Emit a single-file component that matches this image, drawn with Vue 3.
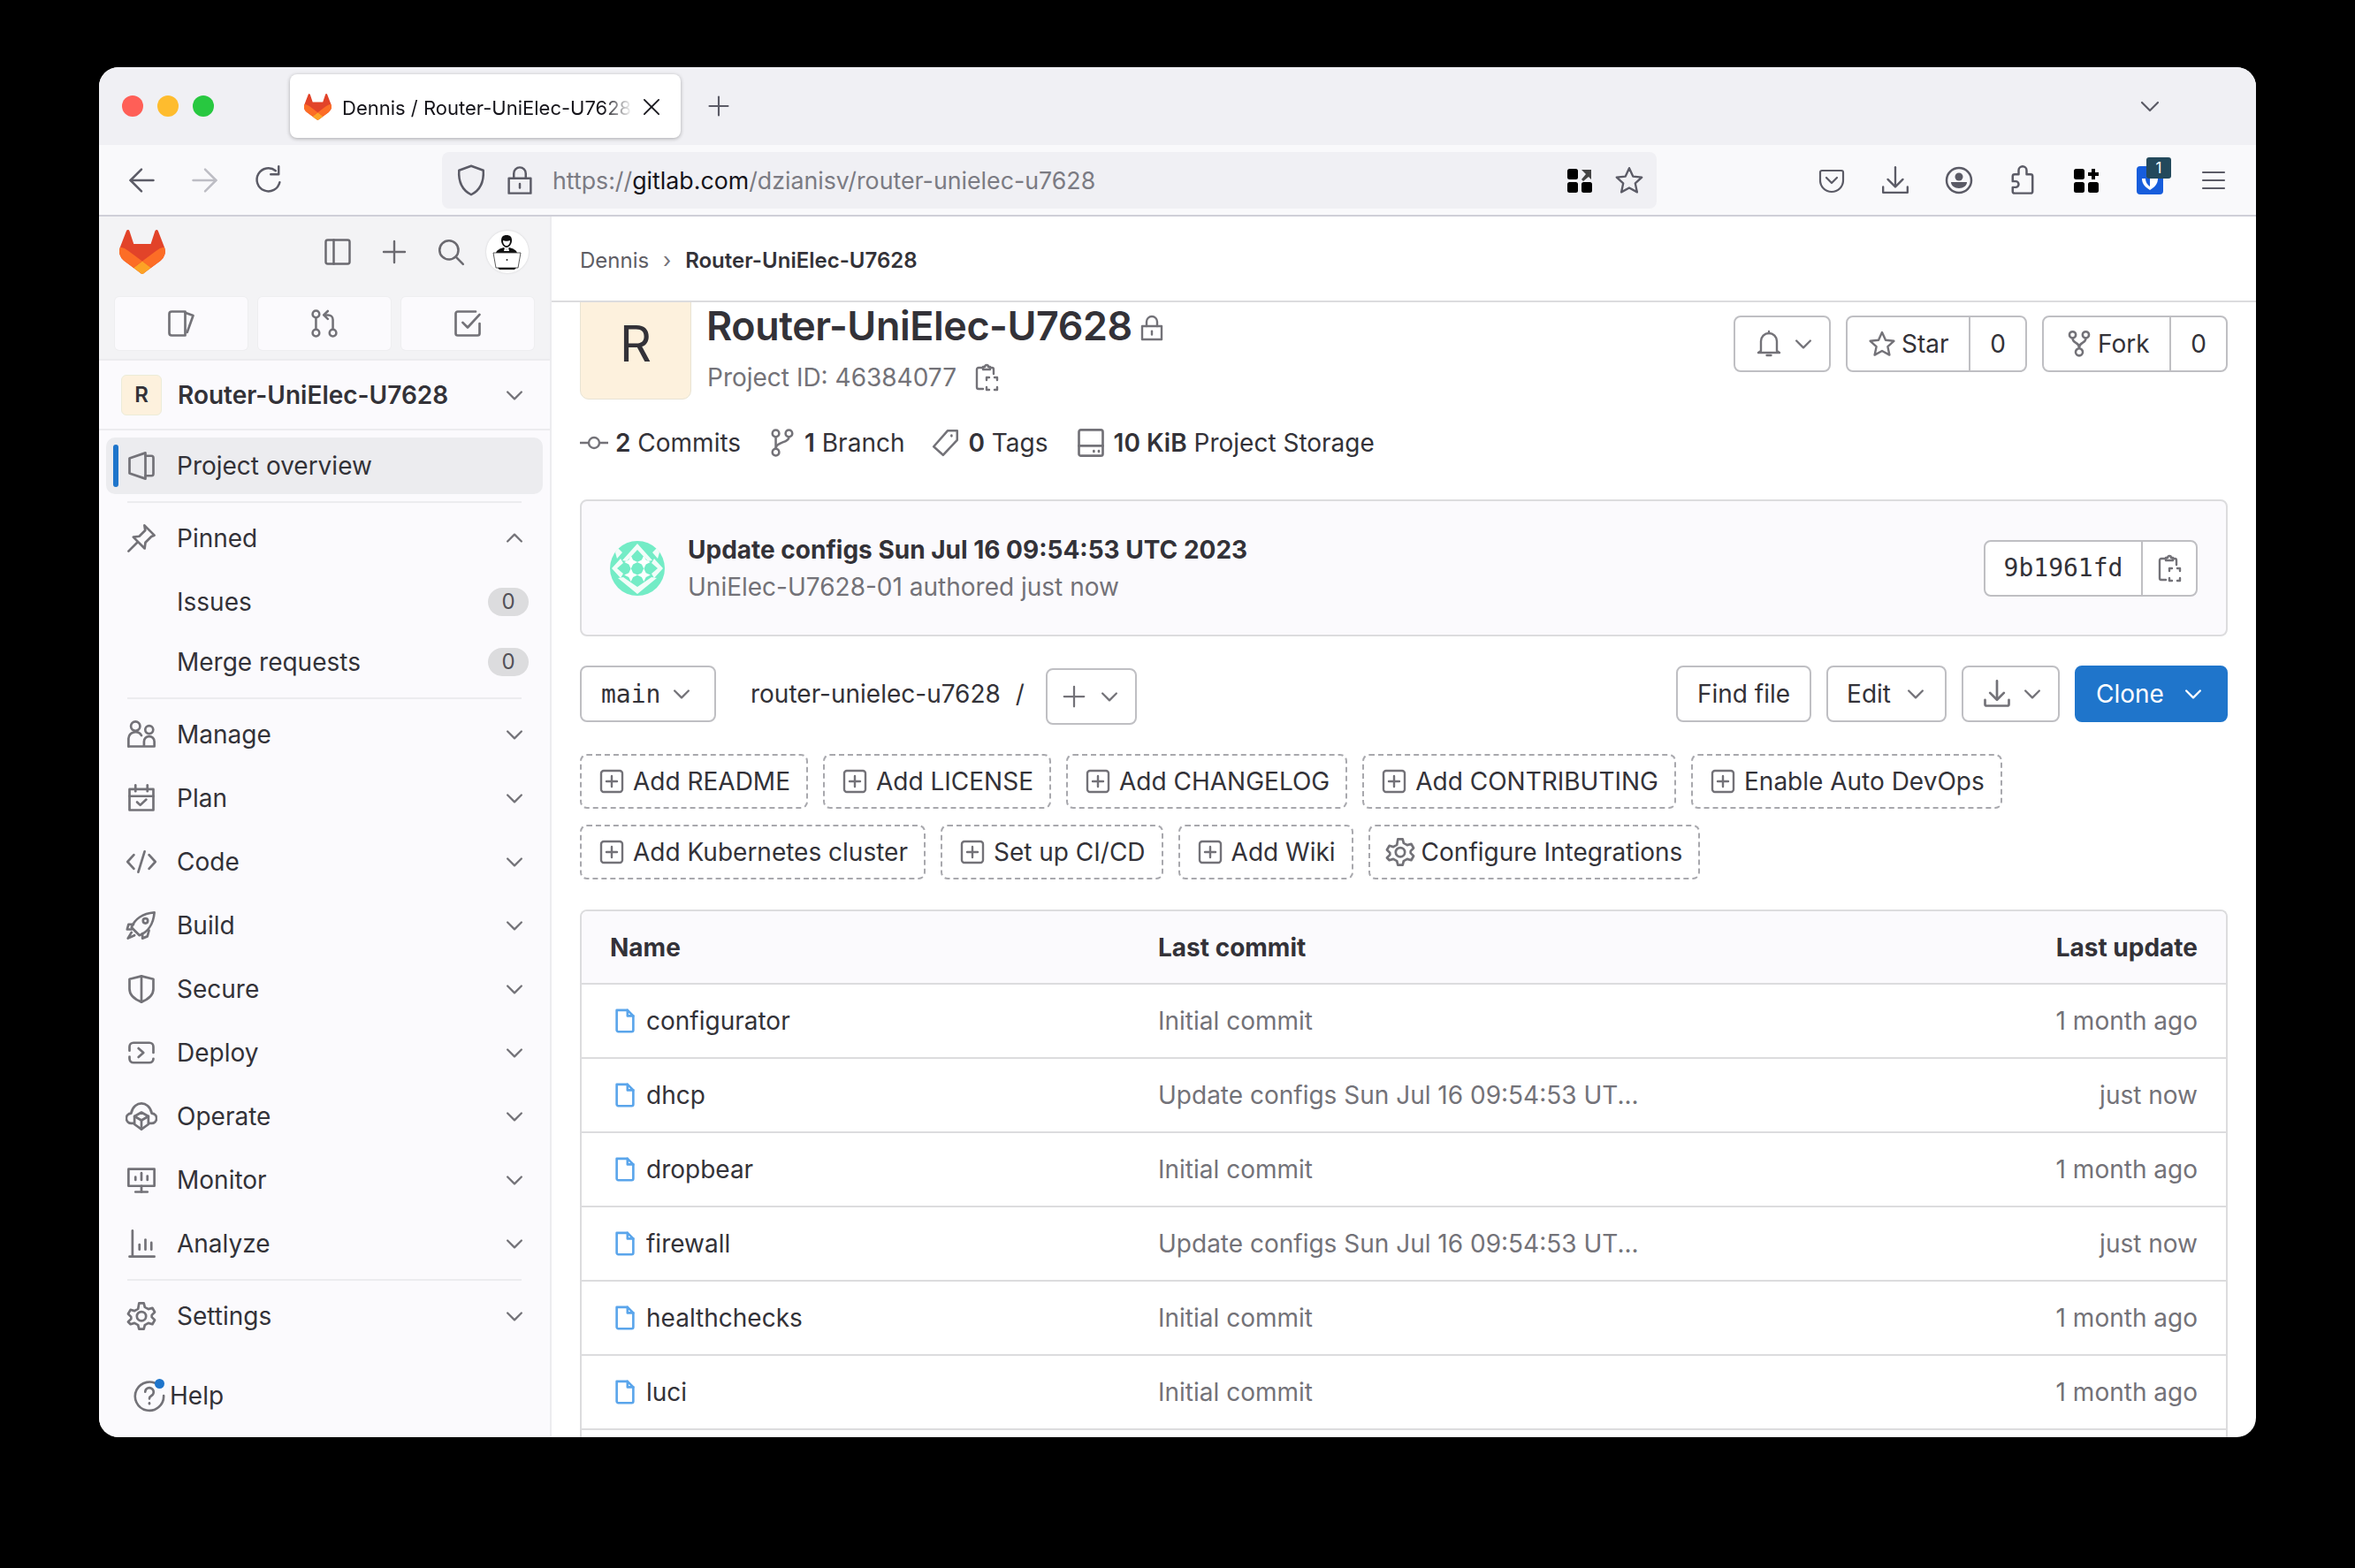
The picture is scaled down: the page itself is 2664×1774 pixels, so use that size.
<script setup>
import { h } from 'vue'

// 16x16 stroke icons
const icons = {
  issues: ['M3.2 2H10v12H3.2A1.2 1.2 0 0 1 2 12.8V3.2A1.2 1.2 0 0 1 3.2 2z', 'M10 2.600l4 1.400-3 8.400'],
  merge: ['M3.500 5v6', 'M12.500 11V6a2.500 2.500 0 0 0-2.500-2.500H8', 'M9.800 1.400L7.600 3.500l2.200 2.100', 'M3.500 1.200a1.800 1.800 0 1 0 0 3.600 1.800 1.800 0 0 0 0-3.600z', 'M3.500 11.200a1.800 1.800 0 1 0 0 3.600 1.800 1.800 0 0 0 0-3.600z', 'M12.500 11.200a1.800 1.800 0 1 0 0 3.600 1.800 1.800 0 0 0 0-3.600z'],
  todo: ['M12 2H3a1 1 0 0 0-1 1v10a1 1 0 0 0 1 1h10a1 1 0 0 0 1-1V8', 'M5.500 7.500L8 10l6-6.500'],
  overview: ['M2 4.200L10 1.500v13L2 11.800z', 'M10 3h3a1 1 0 0 1 1 1v8a1 1 0 0 1-1 1h-3'],
  pin: ['M1.500 14.500L6 10', 'M9.500 1.500l5 5-1.500.6-3 3-.4 3L3.900 7.400l3-.4 3-3z'],
  users: ['M5 1.500a2.300 2.300 0 1 0 0 4.600 2.300 2.300 0 0 0 0-4.600z', 'M1.500 14V10a3.500 3.500 0 0 1 6.500-1.500', 'M1.500 14H14.500V11.500a2.600 2.600 0 0 0-5.200 0V14', 'M11.900 3.600a2 2 0 1 0 0 4 2 2 0 0 0 0-4z'],
  plan: ['M2 3.500h12v10.500H2z', 'M2 7h12', 'M5 1.500v3', 'M11 1.500v3', 'M5.800 10l1.600 1.500 3-2.800'],
  code: ['M4.200 4.500L1 8l3.200 3.500', 'M11.800 4.500L15 8l-3.200 3.500', 'M9.600 2.800L6.400 13.200'],
  rocket: ['M5 11l-2-2c1.500-4 5.500-7 11.500-7.500C14 7.500 11 11.500 7 13z', 'M4 7.500H1.500L.8 10 3 10', 'M8.500 12v2.500l2.500-1 .8-3', 'M3 11.500L1.200 14.500 4.500 13', 'M10 4.500a1.200 1.200 0 1 0 0 2.400 1.200 1.200 0 0 0 0-2.400z'],
  shield: ['M2 3l6-1.500L14 3v5c0 3-3 5.300-6 6.500C5 13.300 2 11 2 8z', 'M8 1.500v13'],
  deploy: ['M2 7V5a2 2 0 0 1 2-2h8a2 2 0 0 1 2 2v3', 'M2 10v1a2 2 0 0 0 2 2h8a2 2 0 0 0 2-2', 'M6.500 5.800L9 8l-2.500 2.200'],
  operate: ['M4 11.500H3A2.500 2.500 0 0 1 2.800 6.500C3.500 3 6 1.500 8 1.500s4.500 1.500 5.200 5A2.500 2.500 0 0 1 13 11.500h-1', 'M8 6l3.500 2v4L8 14.500 4.500 12V8z', 'M4.500 8L8 10l3.500-2', 'M8 10v4.500'],
  monitor: ['M1.500 2.500h13v8.500h-13z', 'M5 14h6', 'M8 11v3', 'M5 8V6.500', 'M8 8V4.500', 'M11 8V6'],
  analyze: ['M2 14.500h12.500', 'M3.500 1.500v13', 'M7 11V8.500', 'M10 11V6', 'M13 11V7.500'],
  gear: ['M6.800 1.500h2.400l.5 2 1.800 1 2-.6 1.200 2.100-1.500 1.500v1l1.500 1.500-1.200 2.100-2-.6-1.800 1-.5 2H6.800l-.5-2-1.800-1-2 .6L1.300 10.900l1.500-1.500v-1L1.300 6.900 2.500 4.800l2 .6 1.800-1z', 'M8 5.800a2.300 2.300 0 1 0 0 4.600 2.300 2.300 0 0 0 0-4.600z'],
  help: ['M12.500 3.200A6.800 6.800 0 1 0 14.800 8', 'M6 6.200a2 2 0 1 1 3 1.800c-.7.400-1 .8-1 1.500', 'M8 11.500v.4'],
  lock: ['M2.500 7h11v7.500h-11z', 'M5 7V4.500a3 3 0 0 1 6 0V7', 'M8 9.800v2'],
  copy: ['M10 2.500h1a1 1 0 0 1 1 1V6', 'M6 2.500H3.500a1 1 0 0 0-1 1V13.500a1 1 0 0 0 1 1H6', 'M6 3.500V2h1a1 1 0 0 1 2 0h1v1.500z', 'M8 9.500V8h1.500', 'M12.500 8H14v1.500', 'M14 13.500V15h-1.500', 'M9.500 15H8v-1.500'],
  commit: ['M0 8h4.500', 'M11.500 8H16', 'M8 5a3 3 0 1 0 0 6 3 3 0 0 0 0-6z'],
  branch: ['M4.500 5v6', 'M11.500 5c0 3-7 2.500-7 6', 'M4.500 1.200a1.800 1.800 0 1 0 0 3.600 1.800 1.800 0 0 0 0-3.600z', 'M11.500 1.200a1.800 1.800 0 1 0 0 3.600 1.800 1.800 0 0 0 0-3.600z', 'M4.500 11.200a1.800 1.800 0 1 0 0 3.600 1.800 1.800 0 0 0 0-3.600z'],
  fork: ['M4.500 5c0 3 3.500 2 3.500 5', 'M11.500 5c0 3-3.500 2-3.500 5', 'M4.500 1.500a1.700 1.700 0 1 0 0 3.400 1.700 1.700 0 0 0 0-3.400z', 'M11.500 1.500a1.700 1.700 0 1 0 0 3.400 1.700 1.700 0 0 0 0-3.400z', 'M8 10.500a1.900 1.900 0 1 0 0 3.800 1.900 1.900 0 0 0 0-3.800z'],
  tag: ['M9 1.500h5v5l-7.500 8L1.500 10z', 'M11 4v.4'],
  disk: ['M3 1.500h10a1 1 0 0 1 1 1v11a1 1 0 0 1-1 1H3a1 1 0 0 1-1-1v-11a1 1 0 0 1 1-1z', 'M2 9.500h12', 'M9.500 12v.4', 'M12 12v.4'],
  bell: ['M3.500 12V6.500a4.500 4.500 0 0 1 9 0V12l1.500 1H2z', 'M8 1v1', 'M6.800 14.500h2.400'],
  star: ['M8 1.500l2 4.400 4.700.5-3.500 3.200 1 4.700L8 12l-4.200 2.300 1-4.700L1.300 6.400 6 5.900z'],
  download: ['M8 1.500v9', 'M4.500 7.500L8 11l3.500-3.500', 'M2 11v2.200a.8.800 0 0 0 .8.800h10.400a.8.800 0 0 0 .8-.8V11'],
  plusbox: ['M3.500 2h9A1.500 1.500 0 0 1 14 3.500v9a1.500 1.500 0 0 1-1.500 1.500h-9A1.500 1.500 0 0 1 2 12.500v-9A1.500 1.500 0 0 1 3.500 2z', 'M8 5v6', 'M5 8h6'],
  file: ['M3 1.500h6.500L13 5v8.500a1 1 0 0 1-1 1H4a1 1 0 0 1-1-1z', 'M9.500 1.500V5H13'],
  plus: ['M8 2v12', 'M2 8h12'],
  down: ['M3.500 6L8 10.500 12.500 6'],
  up: ['M3.500 10L8 5.500 12.500 10'],
  panel: ['M3 2h10a1 1 0 0 1 1 1v10a1 1 0 0 1-1 1H3a1 1 0 0 1-1-1V3a1 1 0 0 1 1-1z', 'M6 2v12'],
  search: ['M7 2a5 5 0 1 0 0 10 5 5 0 0 0 0-10z', 'M10.800 10.800L14.500 14.500'],
  close: ['M3 3l10 10', 'M13 3L3 13'],
  back: ['M14 8H2.500', 'M8 2.500L2.500 8 8 13.500'],
  forward: ['M2 8h11.500', 'M8 2.500L13.500 8 8 13.500'],
  reload: ['M13.500 9A5.800 5.800 0 1 1 11.500 3.200', 'M13 1v4H9'],
  shieldmoz: ['M8 1.500l5.500 2c.3 5-1.500 9-5.500 11-4-2-5.800-6-5.500-11z'],
  pocket: ['M2.500 2.500h11a1 1 0 0 1 1 1V8a6.500 6.500 0 0 1-13 0V3.500a1 1 0 0 1 1-1z', 'M5 6.500L8 9.500l3-3'],
  tray: ['M8 1v10', 'M4 7.500L8 11.500l4-4', 'M1.500 11.500v3h13v-3'],
  puzzle: ['M6 5H4a1 1 0 0 0-1 1v2.500h1.500a1.500 1.500 0 0 1 0 3H3V13.500a1 1 0 0 0 1 1h8a1 1 0 0 0 1-1V6a1 1 0 0 0-1-1H10V3a2 2 0 0 0-4 0z'],
  menu: ['M2 3.500h12', 'M2 8h12', 'M2 12.500h12'],
}

const Ico = (p) => h('svg', {
  class: 'ico',
  viewBox: '0 0 16 16',
  width: p.s || 36,
  height: p.s || 36,
  fill: 'none',
  stroke: 'currentColor',
  'stroke-width': p.w || 1.2,
  'stroke-linecap': 'round',
  'stroke-linejoin': 'round',
}, icons[p.n].map((d) => h('path', { d })))
Ico.props = ['n', 's', 'w']

const Tanuki = (p) => h('svg', { viewBox: '0 0 25 24', width: p.s, height: p.s }, [
  h('path', { fill: '#E24329', d: 'm24.507 9.5-.034-.09L21.082.562a.896.896 0 0 0-1.694.091l-2.29 7.01H7.825L5.535.653a.898.898 0 0 0-1.694-.09L.451 9.411.416 9.5a6.297 6.297 0 0 0 2.09 7.278l.012.01.03.022 5.16 3.867 2.56 1.935 1.554 1.176a1.051 1.051 0 0 0 1.268 0l1.555-1.176 2.56-1.935 5.197-3.89.014-.01A6.297 6.297 0 0 0 24.507 9.5Z' }),
  h('path', { fill: '#FC6D26', d: 'm24.507 9.5-.034-.09a11.44 11.44 0 0 0-4.56 2.051l-7.447 5.632 4.742 3.584 5.197-3.89.014-.01A6.297 6.297 0 0 0 24.507 9.5Z' }),
  h('path', { fill: '#FCA326', d: 'm7.707 20.677 2.56 1.935 1.555 1.176a1.051 1.051 0 0 0 1.268 0l1.555-1.176 2.56-1.935-4.743-3.584-4.755 3.584Z' }),
  h('path', { fill: '#FC6D26', d: 'M5.01 11.461a11.43 11.43 0 0 0-4.56-2.05L.416 9.5a6.297 6.297 0 0 0 2.09 7.278l.012.01.03.022 5.16 3.867 4.745-3.584-7.444-5.632Z' }),
])
Tanuki.props = ['s']

const navMain = [
  ['users', 'Manage'], ['plan', 'Plan'], ['code', 'Code'], ['rocket', 'Build'], ['shield', 'Secure'],
  ['deploy', 'Deploy'], ['operate', 'Operate'], ['monitor', 'Monitor'], ['analyze', 'Analyze'],
]

const stats = [
  ['commit', '2', 'Commits', 32], ['branch', '1', 'Branch', 34], ['tag', '0', 'Tags', 34], ['disk', '10 KiB', 'Project Storage', 36],
]

const addRows = [
  [['plusbox', 'Add README'], ['plusbox', 'Add LICENSE'], ['plusbox', 'Add CHANGELOG'], ['plusbox', 'Add CONTRIBUTING'], ['plusbox', 'Enable Auto DevOps']],
  [['plusbox', 'Add Kubernetes cluster'], ['plusbox', 'Set up CI/CD'], ['plusbox', 'Add Wiki'], ['gear', 'Configure Integrations']],
]

const updateMsg = 'Update configs Sun Jul 16 09:54:53 UT...'
const files = [
  ['configurator', 'Initial commit', '1 month ago'],
  ['dhcp', updateMsg, 'just now'],
  ['dropbear', 'Initial commit', '1 month ago'],
  ['firewall', updateMsg, 'just now'],
  ['healthchecks', 'Initial commit', '1 month ago'],
  ['luci', 'Initial commit', '1 month ago'],
  ['', '', ''],
]

// the four-point stars in the middle of the commit author's identicon
const sparkles = [[23.7, 24], [38.3, 24], [23.7, 38.6], [38.3, 38.6]]
  .map(([x, y]) => `M${x} ${y - 7.500}l2.400 5.100 5.100 2.400-5.100 2.400-2.400 5.100-2.400-5.100-5.100-2.400 5.100-2.400z`)
</script>

<template>
  <div class="screen">
    <div class="window">
      <div class="tabbar">
        <div class="lights">
          <span class="light red"></span>
          <span class="light amber"></span>
          <span class="light green"></span>
        </div>
        <div class="tab">
          <Tanuki :s="32" />
          <span class="tab-title">Dennis / Router-UniElec-U7628</span>
          <Ico n="close" :s="26" :w="1.100" class="tab-close" />
        </div>
        <Ico n="plus" :s="28" :w="1.200" class="tab-new" />
        <Ico n="down" :s="32" :w="1.100" class="tab-list" />
      </div>

      <div class="toolbar">
        <span class="tool"><Ico n="back" :s="36" :w="1.100" /></span>
        <span class="tool dim"><Ico n="forward" :s="36" :w="1.100" /></span>
        <span class="tool"><Ico n="reload" :s="36" :w="1.100" /></span>
        <div class="urlbar">
          <Ico n="shieldmoz" :s="40" :w="1" class="url-shield" />
          <Ico n="lock" :s="36" :w="1.100" class="url-lock" />
          <span class="url"><span class="url-dim">https://</span>gitlab.com<span class="url-dim">/dzianisv/router-unielec-u7628</span></span>
          <svg class="qr" viewBox="0 0 28 28" width="28" height="28" fill="#000">
            <rect x="0" y="1" width="12" height="12" rx="2.500" />
            <rect x="0" y="16" width="12" height="12" rx="2.500" />
            <rect x="16" y="16" width="12" height="12" rx="2.500" />
            <path d="M16 2h11v11l-3-3-6 5-2-2 5-6z" fill="#444" />
          </svg>
          <Ico n="star" :s="34" :w="1.100" class="url-star" />
        </div>
        <div class="tool-right">
          <span class="tool"><Ico n="pocket" :s="32" :w="1.100" /></span>
          <span class="tool"><Ico n="tray" :s="34" :w="1.100" /></span>
          <span class="tool account">
            <svg viewBox="0 0 32 32" width="32" height="32">
              <circle cx="16" cy="16" r="14" fill="none" stroke="currentColor" stroke-width="2.500" />
              <circle cx="16" cy="12" r="4.500" fill="currentColor" />
              <path d="M7 18h18c0 4-4 7-9 7s-9-3-9-7z" fill="currentColor" />
            </svg>
          </span>
          <span class="tool"><Ico n="puzzle" :s="36" :w="1.100" /></span>
          <span class="tool">
            <svg viewBox="0 0 28 28" width="28" height="28" fill="#000">
              <rect x="0" y="1" width="12" height="12" rx="2.500" />
              <rect x="0" y="16" width="12" height="12" rx="2.500" />
              <rect x="16" y="16" width="12" height="12" rx="2.500" />
              <path d="M20 1h4v4h4v4h-4v4h-4V9h-4V5h4z" />
            </svg>
          </span>
          <span class="tool ext">
            <svg viewBox="0 0 32 34" width="32" height="34">
              <path d="M5 1h22a4 4 0 0 1 4 4v24a4 4 0 0 1-4 4H5a4 4 0 0 1-4-4V5a4 4 0 0 1 4-4z" fill="#175ddc" />
              <path d="M7 15h18c0 6-4 10-9 13-5-3-9-7-9-13z" fill="#fff" />
              <path d="M11 15h5v9c-3-2-5-5-5-9z" fill="#175ddc" />
            </svg>
            <span class="ext-badge">1</span>
          </span>
          <span class="tool"><Ico n="menu" :s="32" :w="1.100" /></span>
        </div>
      </div>

      <div class="body">
        <aside class="sidebar">
          <div class="side-top">
            <div class="side-head">
              <span class="side-logo"><Tanuki :s="52" /></span>
              <Ico n="panel" :s="36" :w="1.100" class="head-ic panel" />
              <Ico n="plus" :s="32" class="head-ic plus" />
              <Ico n="search" :s="34" class="head-ic search" />
              <span class="me">
                <svg viewBox="0 0 48 48" width="48" height="48">
                  <circle cx="24" cy="24" r="24" fill="#fff" />
                  <path d="M23 5c4 0 6 2 6 6 0 4-3 8-6 8s-6-4-6-8c0-4 2-6 6-6z" fill="#111" />
                  <path d="M19 11c2 1 6 1 8 0 0 4-2 6-4 6s-4-2-4-6z" fill="#fff" />
                  <path d="M11 26c0-4 5-6 9-7l3 3 3-3c4 1 9 3 9 7z" fill="#111" />
                  <path d="M21 19l2 3 2-3 1 4h-6z" fill="#fff" />
                  <path d="M8 25h31l-3 17H11z" fill="#fff" stroke="#333" stroke-width=".800" />
                  <circle cx="23.500" cy="33" r="1" fill="#222" />
                  <path d="M13 42h21l-2 2H15z" fill="#111" />
                </svg>
              </span>
            </div>
            <div class="side-btns">
              <span class="side-btn"><Ico n="issues" /></span>
              <span class="side-btn"><Ico n="merge" :s="34" /></span>
              <span class="side-btn"><Ico n="todo" /></span>
            </div>
          </div>

          <div class="project-row">
            <span class="project-avatar">R</span>
            <span class="project-name">Router-UniElec-U7628</span>
            <Ico n="down" :s="28" :w="1.300" class="chev" />
          </div>

          <nav class="nav">
            <div class="nav-item active">
              <span class="active-bar"></span>
              <Ico n="overview" />
              <span class="nav-label">Project overview</span>
            </div>
            <hr class="nav-rule" />
            <div class="nav-item pinned-head">
              <Ico n="pin" />
              <span class="nav-label">Pinned</span>
              <Ico n="up" :s="28" :w="1.300" class="chev" />
            </div>
            <div class="nav-item pinned">
              <span class="nav-label">Issues</span>
              <span class="count">0</span>
            </div>
            <div class="nav-item pinned">
              <span class="nav-label">Merge requests</span>
              <span class="count">0</span>
            </div>
            <hr class="nav-rule low" />
            <div v-for="item in navMain" :key="item[1]" class="nav-item">
              <Ico :n="item[0]" />
              <span class="nav-label">{{ item[1] }}</span>
              <Ico n="down" :s="28" :w="1.300" class="chev" />
            </div>
            <hr class="nav-rule tight" />
            <div class="nav-item">
              <Ico n="gear" />
              <span class="nav-label">Settings</span>
              <Ico n="down" :s="28" :w="1.300" class="chev" />
            </div>
          </nav>

          <div class="help">
            <span class="help-icon">
              <Ico n="help" :s="38" :w="1.100" />
              <span class="help-dot"></span>
            </span>
            <span>Help</span>
          </div>
        </aside>

        <main class="main">
          <div class="crumbs">
            <span class="crumb">Dennis</span>
            <span class="crumb-sep">›</span>
            <span class="crumb-here">Router-UniElec-U7628</span>
          </div>

          <div class="scroller">
            <section class="head">
              <span class="big-avatar">R</span>
              <div class="head-text">
                <h1 class="title">Router-UniElec-U7628 <Ico n="lock" :s="32" class="title-lock" /></h1>
                <div class="project-id">Project ID: 46384077 <Ico n="copy" :s="32" class="id-copy" /></div>
              </div>
              <div class="head-actions">
                <span class="btn bell"><Ico n="bell" :s="32" /><Ico n="down" :s="28" :w="1.300" class="chev" /></span>
                <span class="split star-split">
                  <span class="split-main"><Ico n="star" :s="32" />Star</span>
                  <span class="split-count">0</span>
                </span>
                <span class="split fork-split">
                  <span class="split-main"><Ico n="fork" :s="34" />Fork</span>
                  <span class="split-count">0</span>
                </span>
              </div>
            </section>

            <section class="stats">
              <span v-for="s in stats" :key="s[2]" class="stat">
                <Ico :n="s[0]" :s="s[3]" />
                <span><b>{{ s[1] }}</b> {{ s[2] }}</span>
              </span>
            </section>

            <section class="commit">
              <svg class="commit-avatar" viewBox="0 0 62 62" width="62" height="62">
                <circle cx="31" cy="31" r="31" fill="#73ecc6" />
                <path v-for="d in sparkles" :key="d" :d="d" fill="#fff" />
                <path d="M31 3L48 22 43 23 31 10 19 23 14 22zM9 42L31 60 53 42 47 41 31 52 15 41zM2 31L12 20 15 25 8 31 15 37 12 42zM60 31L50 20 47 25 54 31 47 37 50 42zM9 8L14 13 8 20 6 13zM53 8L48 13 54 20 56 13z" fill="#f2fdf9" />
              </svg>
              <div class="commit-text">
                <div class="commit-title">Update configs Sun Jul 16 09:54:53 UTC 2023</div>
                <div class="commit-sub">UniElec-U7628-01 authored just now</div>
              </div>
              <span class="sha">
                <span class="sha-text">9b1961fd</span>
                <span class="sha-copy"><Ico n="copy" :s="32" /></span>
              </span>
            </section>

            <section class="repo-row">
              <span class="btn branch-btn"><span class="mono">main</span><Ico n="down" :s="28" :w="1.300" class="chev" /></span>
              <span class="path">router-unielec-u7628</span>
              <span class="path-slash">/</span>
              <span class="btn add-btn"><Ico n="plus" :s="30" /><Ico n="down" :s="28" :w="1.300" class="chev" /></span>
              <span class="repo-actions">
                <span class="btn">Find file</span>
                <span class="btn edit">Edit<Ico n="down" :s="28" :w="1.300" class="chev" /></span>
                <span class="btn dl"><Ico n="download" :s="36" /><Ico n="down" :s="28" :w="1.300" class="chev" /></span>
                <span class="btn clone">Clone<Ico n="down" :s="28" :w="1.300" /></span>
              </span>
            </section>

            <section class="adds">
              <div v-for="(row, i) in addRows" :key="i" class="add-row">
                <span v-for="a in row" :key="a[1]" class="dashed" :class="{ gear: a[0] === 'gear' }">
                  <Ico :n="a[0]" :s="a[0] === 'gear' ? 36 : 32" />{{ a[1] }}
                </span>
              </div>
            </section>

            <section class="table">
              <div class="tr th">
                <span class="c-name">Name</span>
                <span class="c-commit">Last commit</span>
                <span class="c-date">Last update</span>
              </div>
              <div v-for="(f, i) in files" :key="i" class="tr">
                <span class="c-name file">
                  <Ico v-if="f[0]" n="file" :s="30" :w="1.400" class="file-ic" />{{ f[0] }}
                </span>
                <span class="c-commit muted">{{ f[1] }}</span>
                <span class="c-date muted">{{ f[2] }}</span>
              </div>
            </section>
          </div>
        </main>
      </div>
    </div>
  </div>
</template>

<style>
html, body {
  margin: 0;
  background: #000;
}
</style>

<style scoped>
.screen {
  width: 2664px;
  height: 1774px;
  background: #000;
  padding: 76px 112px 148px;
  box-sizing: border-box;
  font-family: Inter, "Liberation Sans", sans-serif;
  color: #333238;
  font-size: 28px;
}
.window {
  width: 2440px;
  height: 1550px;
  border-radius: 22px;
  overflow: hidden;
  background: #fff;
  display: flex;
  flex-direction: column;
}
.ico {
  flex: none;
  display: block;
  color: #737278;
}

/* browser chrome */
.tabbar {
  height: 88px;
  background: #f0f0f4;
  display: flex;
  align-items: center;
  flex: none;
}
.lights {
  width: 216px;
  padding-left: 26px;
  box-sizing: border-box;
  display: flex;
  gap: 16px;
}
.light {
  width: 24px;
  height: 24px;
  border-radius: 50%;
}
.red { background: #ff5f57; }
.amber { background: #febc2e; }
.green { background: #28c840; }
.tab {
  width: 442px;
  height: 72px;
  background: #fff;
  border-radius: 8px;
  box-shadow: 0 1px 4px rgba(0, 0, 0, 0.3);
  display: flex;
  align-items: center;
  padding: 2px 20px 0 16px;
  box-sizing: border-box;
}
.tab-title {
  font-size: 22px;
  color: #15141a;
  margin: 2px 0 0 12px;
  width: 328px;
  flex: none;
  overflow: hidden;
  white-space: nowrap;
  -webkit-mask-image: linear-gradient(90deg, #000 90%, transparent);
  mask-image: linear-gradient(90deg, #000 90%, transparent);
}
.tab-close {
  color: #15141a;
  margin-left: 9px;
}
.tab-new {
  color: #5b5b66;
  margin-left: 29px;
}
.tab-list {
  color: #5b5b66;
  margin-left: auto;
  margin-right: 104px;
}
.toolbar {
  height: 81px;
  background: #f9f9fb;
  border-bottom: 2px solid #cfcfd8;
  box-sizing: border-box;
  display: flex;
  align-items: center;
  padding: 0 12px;
  flex: none;
}
.tool {
  width: 72px;
  height: 64px;
  display: flex;
  align-items: center;
  justify-content: center;
}
.tool .ico { color: #5b5b66; }
.tool.dim .ico { color: #bdbdc4; }
.account { color: #5b5b66; }
.urlbar {
  margin-left: 160px;
  width: 1374px;
  height: 64px;
  background: #f0f0f4;
  border-radius: 8px;
  display: flex;
  align-items: center;
  padding: 0 14px 0 13px;
  box-sizing: border-box;
}
.url-shield { color: #5b5b66; }
.url-lock {
  color: #5b5b66;
  margin-left: 17px;
}
.url {
  margin-left: 19px;
  font-size: 26.750px;
  color: #15141a;
  white-space: nowrap;
}
.url-dim { color: #7b7b83; }
.qr { margin-left: auto; }
.url-star {
  color: #5b5b66;
  margin-left: 25px;
}
.tool-right {
  margin-left: auto;
  display: flex;
}
.ext { position: relative; }
.ext-badge {
  position: absolute;
  top: 6px;
  left: 32px;
  width: 28px;
  height: 24px;
  border-radius: 3px;
  background: #23495c;
  color: #fff;
  font-size: 17px;
  line-height: 24px;
  text-align: center;
}

/* body */
.body {
  flex: 1;
  min-height: 0;
  display: flex;
}
.sidebar {
  width: 512px;
  flex: none;
  background: #fbfafd;
  border-right: 2px solid #ececef;
  box-sizing: border-box;
  display: flex;
  flex-direction: column;
}
.side-top {
  background: #f3f3f5;
  height: 163px;
  flex: none;
  border-bottom: 2px solid #ececef;
  box-sizing: border-box;
}
.side-head {
  height: 80px;
  margin-bottom: 11px;
  display: flex;
  align-items: center;
}
.side-logo {
  margin-left: 23px;
  display: flex;
}
.head-ic { color: #6b6a70; }
.panel { margin-left: 177px; }
.plus { margin-left: 30px; }
.search { margin-left: 31px; }
.me {
  margin-left: 23px;
  display: flex;
  filter: drop-shadow(0 0 1px rgba(0, 0, 0, 0.15));
}
.side-btns {
  display: flex;
  gap: 12px;
  padding: 0 18px;
}
.side-btn {
  flex: 1;
  height: 60px;
  background: #fbfafd;
  border-radius: 5px;
  display: flex;
  align-items: center;
  justify-content: center;
  box-shadow: 0 0 0 1px #eeeef0;
}
.project-row {
  height: 77px;
  flex: none;
  display: flex;
  align-items: center;
  padding: 0 26px 0 25px;
  border-bottom: 2px solid #ececef;
}
.project-avatar {
  width: 46px;
  height: 46px;
  border-radius: 6px;
  background: #fdf1dd;
  border: 1px solid #ececd8;
  box-sizing: border-box;
  font-size: 24px;
  font-weight: 600;
  text-align: center;
  line-height: 44px;
  margin-right: 18px;
}
.project-name {
  font-weight: 600;
  flex: 1;
  white-space: nowrap;
}
.chev { color: #737278; }
.nav {
  padding: 8px 8px 0;
  display: flex;
  flex-direction: column;
}
.nav-item {
  height: 72px;
  flex: none;
  display: flex;
  align-items: center;
  padding: 0 18px 0 22px;
  position: relative;
}
.nav-item .ico:first-of-type { margin-right: 22px; }
.nav-item .chev { margin-right: 0; }
.nav-label { flex: 1; }
.nav-item.active {
  height: 64px;
  background: #ececef;
  border-radius: 10px;
}
.active-bar {
  position: absolute;
  left: 8px;
  top: 8px;
  bottom: 8px;
  width: 6px;
  border-radius: 3px;
  background: #1f75cb;
}
.pinned-head { margin-bottom: 2px; }
.nav-item.pinned {
  height: 68px;
  padding-left: 80px;
  padding-right: 16px;
}
.count {
  width: 46px;
  height: 32px;
  border-radius: 16px;
  background: #dcdcde;
  color: #535158;
  font-size: 24px;
  line-height: 32px;
  text-align: center;
}
.nav-rule {
  border: 0;
  border-top: 2px solid #ececef;
  margin: 8px 24px 4px;
  width: 446px;
  height: 0;
  flex: none;
}
.nav-rule.low { margin: 6px 24px 4px; }
.nav-rule.tight { margin: 4px 24px 4px; }
.help {
  display: flex;
  align-items: center;
  gap: 4px;
  padding: 35px 0 0 38px;
  color: #333238;
}
.help-icon {
  position: relative;
  display: block;
}
.help-dot {
  position: absolute;
  right: 2px;
  top: 0;
  width: 11px;
  height: 11px;
  border-radius: 50%;
  background: #1f75cb;
}

/* main */
.main {
  flex: 1;
  min-width: 0;
  display: flex;
  flex-direction: column;
  overflow: hidden;
}
.crumbs {
  height: 97px;
  flex: none;
  background: #fff;
  border-bottom: 2px solid #dcdcde;
  box-sizing: border-box;
  padding: 4px 32px 0;
  display: flex;
  align-items: center;
  font-size: 24px;
}
.crumb { color: #5e5d64; }
.crumb-sep {
  color: #737278;
  width: 41px;
  text-align: center;
  flex: none;
}
.crumb-here {
  font-weight: 600;
  color: #333238;
}
.scroller {
  flex: 1;
  min-height: 0;
  overflow: hidden;
  padding: 0 32px;
}
.head {
  margin-top: -16px;
  display: flex;
  align-items: flex-start;
  height: 126px;
}
.big-avatar {
  width: 126px;
  height: 126px;
  border-radius: 10px;
  background: #fdf1dd;
  border: 1px solid #e8e3d4;
  box-sizing: border-box;
  font-size: 56px;
  line-height: 124px;
  text-align: center;
  flex: none;
}
.head-text {
  margin-left: 18px;
  flex: 1;
}
.title {
  margin: 16px 0 0 -1px;
  font-size: 44.800px;
  line-height: 54px;
  font-weight: 600;
  display: flex;
  align-items: center;
  gap: 6px;
  letter-spacing: -0.400px;
}
.title-lock { margin-top: 4px; }
.project-id {
  color: #737278;
  margin-top: 14px;
  line-height: 34px;
  display: flex;
  align-items: center;
  gap: 18px;
}
.head-actions {
  display: flex;
  gap: 17px;
  margin-top: 31px;
}
.btn {
  height: 64px;
  border: 2px solid #bfbfc3;
  border-radius: 8px;
  box-sizing: border-box;
  display: inline-flex;
  align-items: center;
  padding: 0 22px;
  background: #fff;
  white-space: nowrap;
}
.bell {
  width: 110px;
  gap: 9px;
  padding: 0 0 0 22px;
}
.split {
  height: 64px;
  border: 2px solid #bfbfc3;
  border-radius: 8px;
  box-sizing: border-box;
  display: inline-flex;
  align-items: center;
}
.split-main {
  display: flex;
  align-items: center;
  gap: 6px;
  height: 100%;
  border-right: 2px solid #bfbfc3;
  box-sizing: border-box;
}
.star-split .split-main {
  width: 139px;
  padding-left: 23px;
}
.fork-split .split-main {
  width: 144px;
  padding-left: 23px;
  gap: 4px;
}
.split-count {
  width: 62px;
  text-align: center;
}
.stats {
  display: flex;
  gap: 30px;
  height: 40px;
  align-items: center;
  margin-top: 29px;
}
.stat {
  display: flex;
  align-items: center;
  gap: 8px;
  white-space: nowrap;
}
.stat b { font-weight: 600; }
.commit {
  margin-top: 44px;
  height: 155px;
  border: 2px solid #dcdcde;
  border-radius: 8px;
  background: #fbfafd;
  box-sizing: border-box;
  display: flex;
  align-items: center;
  padding: 0 32px;
}
.commit-avatar { flex: none; }
.commit-text { margin-left: 26px; }
.commit-title {
  font-weight: 650;
  line-height: 42px;
}
.commit-sub {
  color: #737278;
  line-height: 42px;
}
.sha {
  margin-left: auto;
  height: 64px;
  border: 2px solid #bfbfc3;
  border-radius: 8px;
  box-sizing: border-box;
  display: flex;
  align-items: center;
  background: #fff;
}
.sha-text {
  font-family: "DejaVu Sans Mono", "Liberation Mono", monospace;
  font-size: 28px;
  width: 178px;
  box-sizing: border-box;
  text-align: center;
  height: 100%;
  line-height: 60px;
  border-right: 2px solid #bfbfc3;
}
.sha-copy {
  width: 60px;
  display: flex;
  justify-content: center;
}
.repo-row {
  margin-top: 33px;
  display: flex;
  align-items: flex-start;
  height: 66px;
}
.branch-btn {
  width: 154px;
  justify-content: space-between;
  padding: 0 23px 0 22px;
}
.mono {
  font-family: "DejaVu Sans Mono", "Liberation Mono", monospace;
  font-size: 28px;
}
.path {
  margin-left: 39px;
  line-height: 64px;
}
.path-slash {
  margin-left: 17px;
  line-height: 64px;
}
.add-btn {
  margin: 3px 0 0 24px;
  width: 103px;
  padding: 0 0 0 15px;
  gap: 11px;
}
.repo-actions {
  margin-left: auto;
  display: flex;
  gap: 17px;
}
.edit {
  gap: 14px;
  padding: 0 19px 0 21px;
}
.dl {
  gap: 8px;
  padding: 0 15px 0 20px;
  width: 111px;
}
.clone {
  background: #1f75cb;
  border-color: #1f75cb;
  color: #fff;
  gap: 19px;
  width: 173px;
  padding: 0 20px 0 22px;
}
.clone .ico { color: #fff; }
.adds {
  margin-top: 34px;
  display: flex;
  flex-direction: column;
  gap: 18px;
}
.add-row {
  display: flex;
  gap: 17px;
}
.dashed {
  height: 62px;
  border: 2px dashed #a8a8ad;
  border-radius: 8px;
  box-sizing: border-box;
  display: inline-flex;
  align-items: center;
  gap: 8px;
  padding: 0 18px 0 18px;
  white-space: nowrap;
}
.dashed.gear {
  gap: 6px;
  padding-left: 16px;
}
.table {
  margin-top: 34px;
  border: 2px solid #dcdcde;
  border-bottom: 0;
  border-radius: 8px 8px 0 0;
  overflow: hidden;
}
.tr {
  height: 84px;
  display: flex;
  align-items: center;
  border-bottom: 2px solid #dcdcde;
  box-sizing: border-box;
  padding: 0 32px;
}
.tr.th {
  height: 83px;
  font-weight: 700;
  background: #fbfafd;
}
.c-name {
  width: 620px;
  flex: none;
  white-space: nowrap;
}
.file {
  display: flex;
  align-items: center;
  gap: 9px;
  margin-left: 2px;
  width: 618px;
}
.file-ic { color: #5aa5eb; }
.c-commit { flex: 1; white-space: nowrap; }
.c-date { white-space: nowrap; text-align: right; }
.muted { color: #737278; }
</style>
